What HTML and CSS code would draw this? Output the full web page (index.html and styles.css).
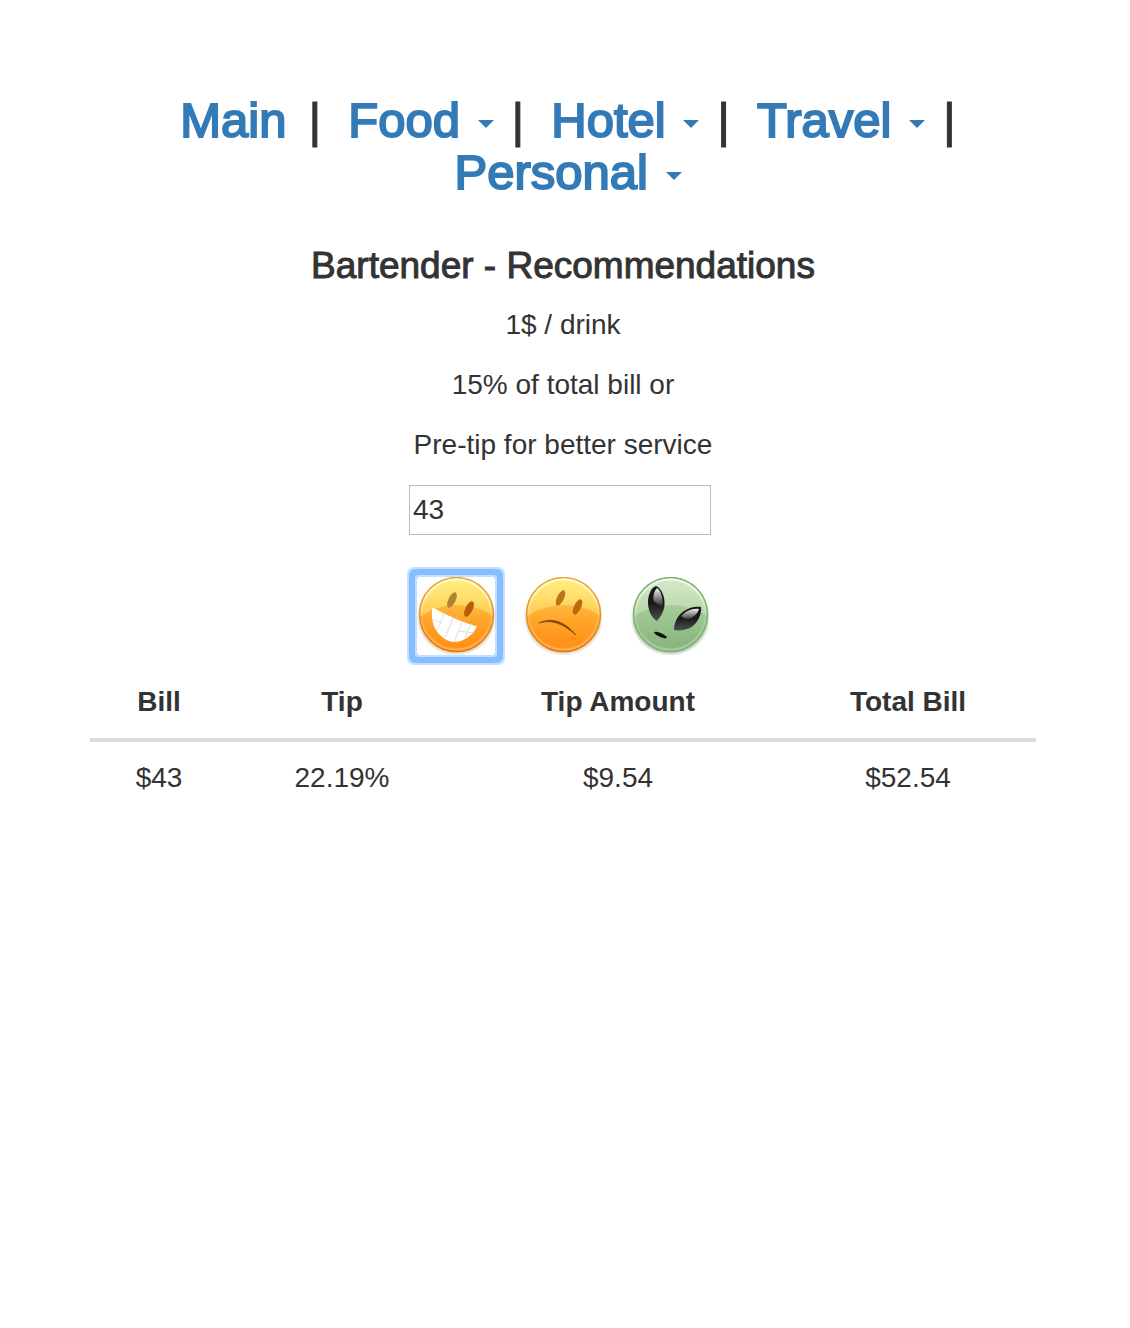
FILE: index.html
```html
<!DOCTYPE html>
<html lang="en">
<head>
<meta charset="utf-8">
<meta name="viewport" content="width=device-width, initial-scale=1">
<title>Bartender - Recommendations</title>
<link rel="stylesheet" href="styles.css">
</head>
<body>
<div class="page">
  <nav class="menu">
    <a class="menu-link" href="#main">Main</a>
    <span class="divider first">|</span>
    <a class="menu-link" href="#food">Food <span class="caret"></span></a>
    <span class="divider">|</span>
    <a class="menu-link" href="#hotel">Hotel <span class="caret"></span></a>
    <span class="divider">|</span>
    <a class="menu-link" href="#travel">Travel <span class="caret"></span></a>
    <span class="divider">|</span>
    <a class="menu-link" href="#personal">Personal <span class="caret"></span></a>
  </nav>
  <main>
    <h1 class="title">Bartender - Recommendations</h1>
    <p class="advice">1$ / drink</p>
    <p class="advice">15% of total bill or</p>
    <p class="advice">Pre-tip for better service</p>
    <form class="tip-form">
      <input class="amount" type="text" value="43" aria-label="Bill amount">
      <div class="moods">
        <button class="mood selected" type="button" aria-label="Great service">
          <svg viewBox="0 0 78 78" aria-hidden="true">
            <defs>
              <linearGradient id="sun" x1="0" y1="0" x2="0" y2="1">
                <stop offset="0" stop-color="#fff084"/>
                <stop offset=".3" stop-color="#ffdc68"/>
                <stop offset=".6" stop-color="#ffc04a"/>
                <stop offset="1" stop-color="#ffa52c"/>
              </linearGradient>
              <linearGradient id="sunLow" x1="0" y1="0" x2="0" y2="1">
                <stop offset="0" stop-color="#ffb83e"/>
                <stop offset=".25" stop-color="#ffa126"/>
                <stop offset=".5" stop-color="#ff9218"/>
                <stop offset="1" stop-color="#ff9c24"/>
              </linearGradient>
              <linearGradient id="rim" x1="0" y1="0" x2="0" y2="1">
                <stop offset="0" stop-color="#e8a93a"/>
                <stop offset="1" stop-color="#e5760c"/>
              </linearGradient>
              <linearGradient id="shine" x1="0" y1="0" x2="0" y2="1">
                <stop offset="0" stop-color="#fff" stop-opacity=".75"/>
                <stop offset=".5" stop-color="#fff" stop-opacity=".1"/>
                <stop offset="1" stop-color="#fff" stop-opacity=".25"/>
              </linearGradient>
              <radialGradient id="shade">
                <stop offset=".84" stop-color="#8a7a40" stop-opacity=".5"/>
                <stop offset="1" stop-color="#8a7a40" stop-opacity="0"/>
              </radialGradient>
              <clipPath id="disc"><circle cx="39.5" cy="37.5" r="37"/></clipPath>
            </defs>
            <ellipse cx="39.5" cy="41" rx="40" ry="38" fill="url(#shade)"/>
            <circle cx="39.5" cy="37.5" r="37" fill="url(#sun)"/>
            <ellipse cx="40" cy="67" rx="52" ry="39" fill="url(#sunLow)" clip-path="url(#disc)"/>
            <circle cx="39.5" cy="37.5" r="37" fill="none" stroke="url(#rim)" stroke-width="1.4"/>
            <circle cx="39.5" cy="37.5" r="35" fill="none" stroke="url(#shine)" stroke-width="2.2"/>
            <ellipse cx="35" cy="23" rx="3.6" ry="8.4" transform="rotate(26 35 23)" fill="#b48236"/>
            <ellipse cx="52" cy="32" rx="3.6" ry="8.4" transform="rotate(26 52 32)" fill="#b55e0a"/>
            <path d="M15.500 30.500Q38 43 60 49.500C55 59 47 65 36 65C24 63 12 50 15.500 30.500Z" fill="#fff"/>
            <path d="M27 37l-7 17M36 41l-8 20M45 45l-8 20M53 48l-5 13M15 42l10 4M42 54l15 2" fill="none" stroke="#ddd" stroke-width="1"/>
          </svg>
        </button>
        <button class="mood" type="button" aria-label="Poor service">
          <svg viewBox="0 0 78 78" aria-hidden="true">
            <ellipse cx="39.5" cy="41" rx="40" ry="38" fill="url(#shade)"/>
            <circle cx="39.5" cy="37.5" r="37" fill="url(#sun)"/>
            <ellipse cx="40" cy="67" rx="52" ry="39" fill="url(#sunLow)" clip-path="url(#disc)"/>
            <circle cx="39.5" cy="37.5" r="37" fill="none" stroke="url(#rim)" stroke-width="1.4"/>
            <circle cx="39.5" cy="37.5" r="35" fill="none" stroke="url(#shine)" stroke-width="2.2"/>
            <ellipse cx="36.500" cy="21" rx="3.4" ry="8.4" transform="rotate(26 36.500 21)" fill="#ba741c"/>
            <ellipse cx="53.500" cy="30" rx="3.4" ry="8.400" transform="rotate(26 53.500 30)" fill="#be680d"/>
            <path d="M15 46C28 40 40 44 52 58C39 47 29 42 15 46Z" fill="#7c4806" stroke="#7c4806" stroke-width=".7"/>
            <path d="M46 60q3 3 7 1" fill="none" stroke="#fb861b" stroke-width="2"/>
          </svg>
        </button>
        <button class="mood" type="button" aria-label="Strange service">
          <svg viewBox="0 0 78 78" aria-hidden="true">
            <defs>
              <linearGradient id="moss" x1="0" y1="0" x2="0" y2="1">
                <stop offset="0" stop-color="#d5ebc9"/>
                <stop offset="1" stop-color="#98c08a"/>
              </linearGradient>
              <linearGradient id="mossLow" x1="0" y1="0" x2="0" y2="1">
                <stop offset="0" stop-color="#a8cd99"/>
                <stop offset=".5" stop-color="#8ab67f"/>
                <stop offset="1" stop-color="#98c58c"/>
              </linearGradient>
              <linearGradient id="eye" x1="0" y1="0" x2="0" y2="1">
                <stop offset="0" stop-color="#111"/>
                <stop offset=".5" stop-color="#1a1a1a"/>
                <stop offset="1" stop-color="#505050"/>
              </linearGradient>
              <linearGradient id="glint" x1="0" y1="0" x2="0" y2="1">
                <stop offset="0" stop-color="#fff" stop-opacity=".95"/>
                <stop offset="1" stop-color="#fff" stop-opacity=".15"/>
              </linearGradient>
              <radialGradient id="mossShade">
                <stop offset=".84" stop-color="#3f7048" stop-opacity=".6"/>
                <stop offset="1" stop-color="#3f7048" stop-opacity="0"/>
              </radialGradient>
            </defs>
            <ellipse cx="39.5" cy="41" rx="40" ry="38" fill="url(#mossShade)"/>
            <circle cx="39.5" cy="37.5" r="37" fill="url(#moss)"/>
            <ellipse cx="40" cy="67" rx="52" ry="39" fill="url(#mossLow)" clip-path="url(#disc)"/>
            <circle cx="39.5" cy="37.5" r="37" fill="none" stroke="#7fb272" stroke-width="1.400"/>
            <circle cx="39.5" cy="37.5" r="35" fill="none" stroke="url(#shine)" stroke-width="2.200"/>
            <path d="M25 9C31 12 34 20 33.500 28C33 35 29 41 25.500 44C20 40 17 33 17 25C17 18 20 11 25 9Z" fill="url(#eye)"/>
            <path d="M26 11C30 14 32 20 31.500 28C28 28 24 26 22.500 23C22 18 23 14 26 11Z" fill="url(#glint)"/>
            <path d="M70 30C71 38 66 47 59 51C54 53 48 54 43 53C43 45 47 38 53 34C59 30 65 29 70 30Z" fill="url(#eye)"/>
            <path d="M68 32C67 36 63 40 58 42C54 42 52 41 50 39C55 34 61 31 68 32Z" fill="url(#glint)"/>
            <ellipse cx="29.500" cy="58" rx="7" ry="1.800" transform="rotate(24 29.500 58)" fill="#111"/>
          </svg>
        </button>
      </div>
    </form>
    <table class="result">
      <thead>
        <tr><th class="col-bill" scope="col">Bill</th><th class="col-tip" scope="col">Tip</th><th class="col-amount" scope="col">Tip Amount</th><th class="col-total" scope="col">Total Bill</th></tr>
      </thead>
      <tbody>
        <tr><td>$43</td><td>22.19%</td><td>$9.54</td><td>$52.54</td></tr>
      </tbody>
    </table>
  </main>
</div>
</body>
</html>
```
FILE: styles.css
```css
* {
  box-sizing: border-box;
}

body {
  margin: 0;
  background: #fff;
  color: #333;
  font: 28px/40px "Liberation Sans", Arial, sans-serif;
  text-align: center;
}

.page {
  padding: 94px 94px 40px 90px;
}

.menu {
  display: flex;
  flex-wrap: wrap;
  justify-content: center;
  padding-left: 10px;
  font-size: 49px;
  line-height: 52px;
  -webkit-text-stroke: 2px currentColor;
}

.menu-link {
  color: #337ab7;
  text-decoration: none;
  white-space: nowrap;
}

.divider {
  margin: 0 27px 0 18px;
  -webkit-text-stroke: 1px currentColor;
}

.divider.first {
  margin-left: 22px;
}

.divider:last-of-type {
  margin-right: 0;
}

.caret {
  display: inline-block;
  margin-left: 4px;
  vertical-align: middle;
  border-top: 8px solid;
  border-right: 8px solid transparent;
  border-left: 8px solid transparent;
}

.title {
  margin: 48px 0 19px;
  font-size: 37px;
  font-weight: 400;
  line-height: 40px;
  -webkit-text-stroke: 1px currentColor;
}

.advice {
  margin: 0 0 20px;
}

.tip-form {
  display: flex;
  flex-direction: column;
  align-items: center;
  gap: 42px;
  padding-right: 6px;
}

.amount {
  width: 302px;
  height: 50px;
  padding: 0 3px;
  border: 1px solid #bbb;
  color: #333;
  background: #fff;
  font: inherit;
}

.moods {
  display: flex;
  gap: 29px;
  padding-left: 6px;
}

.mood {
  width: 78px;
  height: 78px;
  padding: 0;
  border: 0;
  background: none;
}

.mood svg {
  display: block;
  width: 100%;
  height: 100%;
}

.mood.selected {
  border-radius: 2px;
  box-shadow: 0 0 0 2px #c5e0ff, 0 0 0 8px #84bfff, 0 0 0 10px #c5e0ff;
}

.result {
  width: 100%;
  margin-top: 11px;
  border-collapse: separate;
  border-spacing: 0;
  table-layout: fixed;
}

.result th,
.result td {
  padding: 16px;
}

.result th {
  border-bottom: 4px solid #ddd;
}

.col-bill {
  width: 138px;
}

.col-tip {
  width: 228px;
}

.col-amount {
  width: 324px;
}

.col-total {
  width: 256px;
}
```
